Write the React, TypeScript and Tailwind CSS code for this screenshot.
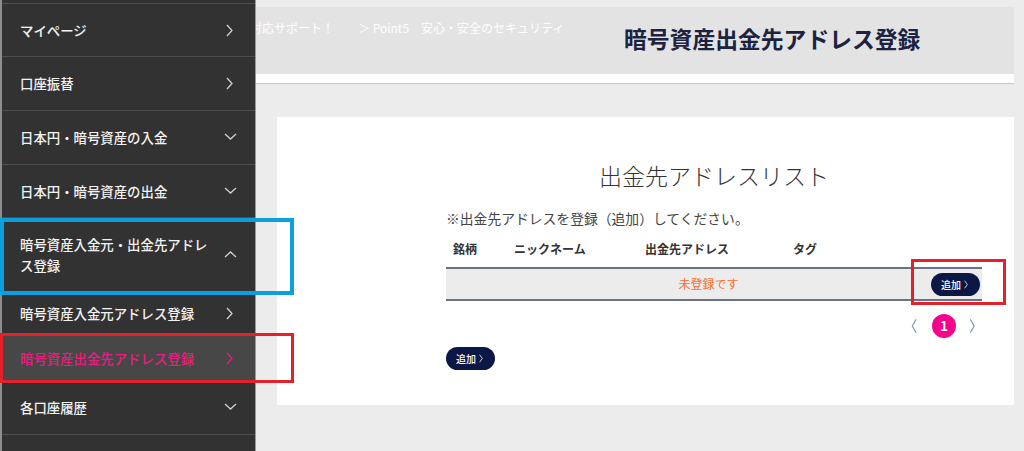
const JP = "font-['Noto_Sans_CJK_JP','Noto_Sans',sans-serif]";

function Chevron({ dir, className }: { dir: "right" | "down" | "up" | "left"; className?: string }) {
  const d =
    dir === "right"
      ? "M3 1 L8 6.5 L3 12"
      : dir === "left"
        ? "M8 1 L3 6.5 L8 12"
        : dir === "down"
          ? "M1 3 L6.5 8 L12 3"
          : "M1 9 L6.5 4 L12 9";
  return (
    <svg viewBox="0 0 13 13" preserveAspectRatio="none" className={className} fill="none" stroke="currentColor" strokeWidth="1.3">
      <path d={d} />
    </svg>
  );
}

function NavItem({
  label,
  dir,
  h,
  active,
  border = true,
}: {
  label: string;
  dir: "right" | "down" | "up";
  h: string;
  active?: boolean;
  border?: boolean;
}) {
  return (
    <div
      className={`flex items-center justify-between pl-[18px] pr-[18px] ${h} ${border ? "border-b border-[#4d4d4d]" : ""} ${
        active ? "bg-[#474747] text-[#ea1c82]" : "text-[#f2f2f2]"
      }`}
    >
      <span className="w-[195px] text-[13.4px] leading-[21px] font-medium">{label}</span>
      <Chevron dir={dir} className={`h-[13px] w-[13px] ${active ? "text-[#ea1c82]" : "text-[#d0d0d0]"}`} />
    </div>
  );
}

function AddButton() {
  return (
    <button className="flex h-[23px] w-[49px] items-center justify-center gap-[2px] rounded-full bg-[#0b1744] text-[10px] font-medium text-white">
      追加
      <Chevron dir="right" className="h-[9px] w-[7px] text-white" />
    </button>
  );
}

export default function App() {
  return (
    <div className={`relative flex h-[451px] w-[1024px] overflow-hidden bg-[#ececec] ${JP}`}>
      {/* sidebar */}
      <aside className="flex w-[256px] shrink-0 flex-col border-l-[2px] border-r border-l-[#8e8e8e] border-r-[#9a9a9a] bg-[#323232]">
        <div className="h-[4px] shrink-0 border-b border-[#4d4d4d]" />
        <NavItem label="マイページ" dir="right" h="h-[53px]" />
        <NavItem label="口座振替" dir="right" h="h-[54px]" />
        <NavItem label="日本円・暗号資産の入金" dir="down" h="h-[54px]" />
        <NavItem label="日本円・暗号資産の出金" dir="down" h="h-[53px]" />
        <NavItem label="暗号資産入金元・出金先アドレス登録" dir="up" h="h-[73px]" border={false} />
        <NavItem label="暗号資産入金元アドレス登録" dir="right" h="h-[44px]" border={false} />
        <NavItem label="暗号資産出金先アドレス登録" dir="right" h="h-[46px]" active border={false} />
        <NavItem label="各口座履歴" dir="down" h="h-[54px]" />
        <div className="flex-1" />
      </aside>

      {/* main */}
      <main className="flex min-w-0 flex-1 flex-col pr-[10px] pt-[7px]">
        <div className="flex h-[67px] bg-[#e3e3e3]">
          <div className="w-[368px] shrink-0 overflow-hidden pt-[13px]">
            <div className="-ml-[6px] flex whitespace-nowrap text-[12px] leading-[16px] text-white">
              <span>対応サポート！</span>
              <span className="ml-[24px]">＞ Point5　安心・安全のセキュリティ</span>
            </div>
          </div>
          <h1 className="pt-[17px] text-[22.8px] font-bold leading-[30px] text-[#1c2340]">暗号資産出金先アドレス登録</h1>
        </div>
        <div className="h-[9px] bg-white" />
        <div className="h-px bg-[#c6c6c6]" />

        <section className="ml-[21px] mt-[33px] h-[288px] bg-white pl-[169px] pr-[32px] pt-[42px]">
          <h2 className="text-center text-[23px] font-light leading-[32px] text-[#333]">出金先アドレスリスト</h2>
          <p className="mt-[17px] text-[13.8px] leading-[20px] text-[#444]">※出金先アドレスを登録（追加）してください。</p>

          <div className="mt-[2px] flex h-[37px] items-center pl-[7px] text-[12px] font-bold text-[#333]">
            <span className="w-[61px]">銘柄</span>
            <span className="w-[131px]">ニックネーム</span>
            <span className="w-[148px]">出金先アドレス</span>
            <span>タグ</span>
          </div>
          <div className="flex h-[34px] items-center border-y-2 border-[#6c7183] bg-[#ececec] pr-[2px]">
            <span className="flex-1 pl-[40px] text-center text-[12px] text-[#ff6a2c]">未登録です</span>
            <AddButton />
          </div>

          <div className="mt-[13px] flex items-center justify-end gap-[12px] pr-[4px]">
            <Chevron dir="left" className="h-[16px] w-[10px] text-[#8494ac]" />
            <span className="flex h-[24px] w-[24px] items-center justify-center rounded-full bg-[#f4048c] text-[13px] font-bold text-white">
              1
            </span>
            <Chevron dir="right" className="h-[16px] w-[10px] text-[#8494ac]" />
          </div>

          <div className="mt-[9px]">
            <AddButton />
          </div>
        </section>
      </main>

      {/* annotation boxes */}
      <div className="pointer-events-none absolute left-0 top-[218px] h-[77px] w-[294px] border-[4px] border-[#0aa0dd]" />
      <div className="pointer-events-none absolute left-0 top-[333px] h-[50px] w-[294px] border-[3px] border-[#e4202a]" />
      <div className="pointer-events-none absolute left-[911px] top-[259px] h-[46px] w-[95px] border-[3px] border-[#e4202a]" />
    </div>
  );
}
